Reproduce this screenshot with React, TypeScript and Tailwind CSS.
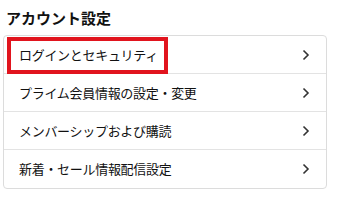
import React from 'react';

const items = [
  'ログインとセキュリティ',
  'プライム会員情報の設定・変更',
  'メンバーシップおよび購読',
  '新着・セール情報配信設定',
];

function Chevron() {
  return (
    <svg width="8" height="12" viewBox="0 0 8 12" fill="none" className="text-[#333]">
      <path d="M1.5 1.5L6 6L1.5 10.5" stroke="currentColor" strokeWidth="1.6" />
    </svg>
  );
}

export default function App() {
  return (
    <div
      className="w-[340px] h-[204px] bg-white px-[3px] pt-[7px]"
      style={{ fontFamily: '"Noto Sans CJK JP", "Noto Sans", sans-serif' }}
    >
      <h2 className="pl-[3px] text-[15px] leading-[22px] font-bold text-[#111]">アカウント設定</h2>
      <div className="mt-[6px] w-[324px] border border-[#dcdcdc] rounded-[4px] bg-white">
        {items.map((label, i) => (
          <div
            key={label}
            className={`relative flex items-center justify-between h-[38px] pl-[15px] pr-[16px] ${
              i < items.length - 1 ? 'border-b border-[#e3e3e3]' : ''
            }`}
          >
            <span className="text-[13px] text-[#111] tracking-[-0.3px]">{label}</span>
            <Chevron />
            {i === 0 && (
              <div className="absolute left-[3px] top-[1px] w-[161px] h-[37px] border-[4px] border-[#e1141e]" />
            )}
          </div>
        ))}
      </div>
    </div>
  );
}
